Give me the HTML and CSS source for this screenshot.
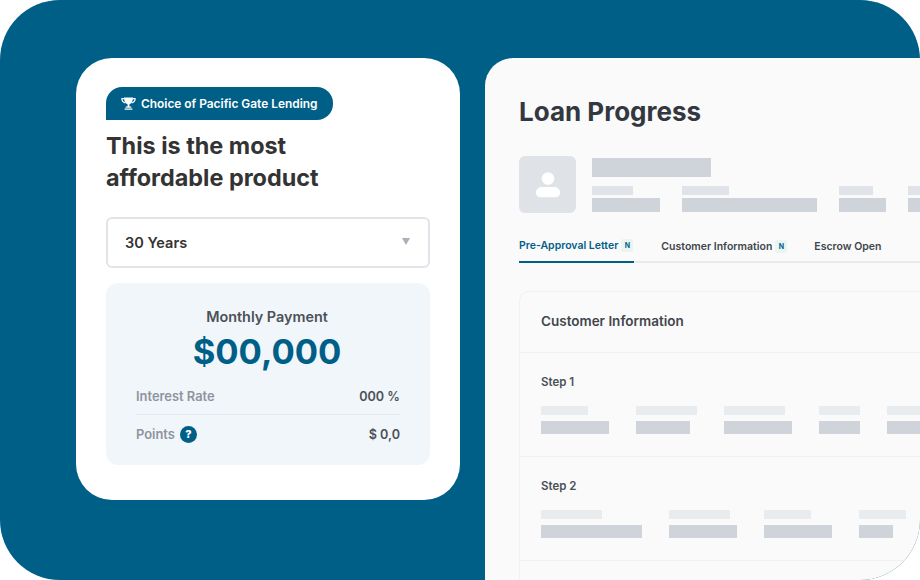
FILE: index.html
```html
<!DOCTYPE html>
<html lang="en">
<head>
  <meta charset="UTF-8" />
  <title>Loan Progress</title>
  <link rel="stylesheet" href="styles.css">
</head>
<body>
<div class="stage">

  <!-- Product card -->
  <section class="card">
    <div class="badge">
      <svg class="trophy" viewBox="0 0 16 14" width="15" height="13">
        <path fill="none" stroke="#fff" stroke-width="1.3" d="M3.5 1.7H.9c0 2.6 1.1 4.2 3.6 4.600M12.500 1.700h2.600c0 2.600-1.100 4.200-3.600 4.600"/>
        <path fill="#fff" d="M3.200.5h9.600c0 4-1.300 6.600-3.800 7.300v2.500h2v1.300H4.900v-1.300h2.100V7.800C4.500 7.100 3.200 4.500 3.200.5z"/>
        <path fill="#fff" d="M3.800 12.300h8.400v1.400H3.800z"/>
      </svg>
      <span>Choice of Pacific Gate Lending</span>
    </div>
    <h2 class="card-title">This is the most<br>affordable product</h2>
    <div class="select">
      <span>30 Years</span>
      <i class="caret"></i>
    </div>
    <div class="payment">
      <div class="payment-label">Monthly Payment</div>
      <div class="payment-amount">$00,000</div>
      <div class="row row-line">
        <span class="row-name">Interest Rate</span>
        <span class="row-value">000 %</span>
      </div>
      <div class="row">
        <span class="row-name">Points <b class="help">?</b></span>
        <span class="row-value">$ 0,0</span>
      </div>
    </div>
  </section>

  <!-- Loan progress panel -->
  <section class="panel">
    <h1 class="panel-title">Loan Progress</h1>

    <div class="profile">
      <div class="avatar">
        <svg viewBox="0 0 24 26" width="24" height="26">
          <circle cx="12" cy="6.500" r="6.300" fill="#fff"/>
          <path fill="#fff" d="M6 15h12c3.300 0 6 2.400 6 5.500 0 3-1.800 4.800-4 4.800H4c-2.200 0-4-1.800-4-4.800C0 17.400 2.700 15 6 15z"/>
        </svg>
      </div>
      <div class="profile-info">
        <div class="bar bar-name"></div>
        <div class="cols cols-profile">
          <div class="col"><div class="bar bar-sm w41"></div><div class="bar bar-md w68"></div></div>
          <div class="col"><div class="bar bar-sm w47"></div><div class="bar bar-md w135"></div></div>
          <div class="col"><div class="bar bar-sm w34"></div><div class="bar bar-md w47"></div></div>
          <div class="col"><div class="bar bar-sm w41"></div><div class="bar bar-md w68"></div></div>
        </div>
      </div>
    </div>

    <nav class="tabs">
      <a class="tab tab-active">Pre-Approval Letter <span class="tag">N</span></a>
      <a class="tab">Customer Information <span class="tag">N</span></a>
      <a class="tab">Escrow Open</a>
    </nav>

    <div class="info">
      <h3 class="info-title">Customer Information</h3>
      <div class="step">
        <h4 class="step-title">Step 1</h4>
        <div class="cols">
          <div class="col"><div class="bar bar-sm w47"></div><div class="bar bar-md w68"></div></div>
          <div class="col"><div class="bar bar-sm w61"></div><div class="bar bar-md w54"></div></div>
          <div class="col"><div class="bar bar-sm w61"></div><div class="bar bar-md w68"></div></div>
          <div class="col"><div class="bar bar-sm w41"></div><div class="bar bar-md w41"></div></div>
          <div class="col"><div class="bar bar-sm w61"></div><div class="bar bar-md w68"></div></div>
        </div>
      </div>
      <div class="step">
        <h4 class="step-title">Step 2</h4>
        <div class="cols">
          <div class="col"><div class="bar bar-sm w61"></div><div class="bar bar-md w101"></div></div>
          <div class="col"><div class="bar bar-sm w61"></div><div class="bar bar-md w68"></div></div>
          <div class="col"><div class="bar bar-sm w47"></div><div class="bar bar-md w68"></div></div>
          <div class="col"><div class="bar bar-sm w47"></div><div class="bar bar-md w34"></div></div>
        </div>
      </div>
      <div class="step"></div>
    </div>
  </section>

</div>
</body>
</html>
```

FILE: styles.css
```css
body {
  margin: 0;
  background: #fff;
  font-family: Inter, "Liberation Sans", sans-serif;
}
h1, h2, h3, h4 {
  margin: 0;
}

.stage {
  display: flex;
  align-items: flex-start;
  gap: 25px;
  width: 920px;
  height: 580px;
  padding: 58px 0 0 76px;
  box-sizing: border-box;
  background: #005f87;
  border-radius: 60px;
  overflow: hidden;
}

/* Product card */
.card {
  flex: none;
  width: 384px;
  height: 442px;
  padding: 29px 30px 0;
  box-sizing: border-box;
  background: #fff;
  border-radius: 36px;
}
.badge {
  display: flex;
  align-items: center;
  gap: 5px;
  width: 227px;
  height: 33px;
  padding-left: 15px;
  box-sizing: border-box;
  background: #005f87;
  border-radius: 16px 16px 16px 0;
  color: #fff;
  font-size: 11.900px;
  font-weight: 600;
}
.card-title {
  margin-top: 10px;
  color: #333;
  font-size: 23.400px;
  font-weight: 700;
  line-height: 32px;
}
.select {
  display: flex;
  align-items: center;
  justify-content: space-between;
  height: 51px;
  margin-top: 23px;
  padding: 0 18px 0 17px;
  box-sizing: border-box;
  border: 2px solid #e1e5ea;
  border-radius: 6px;
  color: #333;
  font-size: 14.500px;
  font-weight: 600;
}
.caret {
  width: 0;
  height: 0;
  margin-top: -3px;
  border-left: 4.500px solid transparent;
  border-right: 4.500px solid transparent;
  border-top: 7px solid #a9b0bb;
}
.payment {
  height: 182px;
  margin-top: 15px;
  padding: 25px 30px 0;
  box-sizing: border-box;
  background: #f1f6fa;
  border-radius: 12px;
}
.payment-label {
  padding-right: 2px;
  color: #4b5158;
  font-size: 14.400px;
  font-weight: 600;
  line-height: 18px;
  text-align: center;
}
.payment-amount {
  margin-top: 3px;
  padding-right: 2px;
  color: #005f87;
  font-size: 34.600px;
  font-weight: 700;
  line-height: 44px;
  text-align: center;
}
.row {
  display: flex;
  align-items: center;
  justify-content: space-between;
  height: 38px;
  font-size: 12.900px;
  font-weight: 600;
}
.row-line {
  height: 36px;
  margin-top: 5px;
  border-bottom: 1px solid #e6eaee;
}
.row-name {
  display: flex;
  align-items: center;
  gap: 5px;
  color: #8e949e;
}
.row-value {
  color: #4b5158;
  font-size: 12.600px;
}
.help {
  width: 17px;
  height: 17px;
  background: #005f87;
  border-radius: 50%;
  color: #fff;
  font-size: 11px;
  font-weight: 800;
  line-height: 17px;
  text-align: center;
}

/* Loan progress panel */
.panel {
  flex: none;
  width: 480px;
  height: 560px;
  padding: 38px 0 0 34px;
  box-sizing: border-box;
  background: #fafafa;
  border-radius: 28px;
}
.panel-title {
  color: #333840;
  font-size: 26px;
  font-weight: 700;
  line-height: 32px;
}
.profile {
  display: flex;
  gap: 16px;
  margin-top: 28px;
}
.avatar {
  display: flex;
  align-items: center;
  justify-content: center;
  flex: none;
  width: 57px;
  height: 57px;
  background: #dfe2e7;
  border-radius: 6px;
}
.profile-info {
  padding-top: 2px;
}
.bar-name {
  width: 119px;
  height: 19px;
  margin-bottom: 9px;
  background: #cfd4db;
}
.cols {
  display: flex;
  gap: 27px;
}
.cols-profile {
  gap: 22px;
}
.col {
  flex: none;
}
.bar-sm {
  height: 9px;
  margin-bottom: 3px;
  background: #e0e3e8;
}
.bar-md {
  height: 14px;
  background: #cfd4db;
}
.w34 { width: 34px; }
.w41 { width: 41px; }
.w47 { width: 47px; }
.w54 { width: 54px; }
.w61 { width: 61px; }
.w68 { width: 68px; }
.w101 { width: 101px; }
.w135 { width: 135px; }

.tabs {
  display: flex;
  gap: 27px;
  height: 50px;
  box-sizing: border-box;
  border-bottom: 2px solid #e8eaee;
}
.tab {
  display: flex;
  align-items: center;
  gap: 3px;
  height: 50px;
  padding-top: 17px;
  box-sizing: border-box;
  color: #41464d;
  font-size: 10.500px;
  font-weight: 600;
}
.tab-active {
  padding-right: 1px;
  border-bottom: 2px solid #005f87;
  color: #005f87;
}
.tag {
  width: 12px;
  height: 13px;
  background: #e8f5f1;
  border-radius: 3px;
  color: #005f87;
  font-size: 7px;
  font-weight: 700;
  line-height: 13px;
  text-align: center;
}

.info {
  margin-top: 28px;
  border: 1px solid #f0f1f3;
  border-radius: 10px 0 0 0;
}
.info-title {
  height: 60px;
  padding-left: 21px;
  box-sizing: border-box;
  color: #41464d;
  font-size: 13.500px;
  font-weight: 600;
  line-height: 59px;
}
.step {
  height: 104px;
  padding: 21px 0 0 21px;
  box-sizing: border-box;
  border-top: 1px solid #f0f1f3;
}
.step-title {
  margin-bottom: 16px;
  color: #4b5158;
  font-size: 11.500px;
  font-weight: 600;
  line-height: 16px;
}
.step .bar-sm {
  margin-bottom: 6px;
  background: #e9ecef;
}
.step .bar-md {
  height: 13px;
}
```
